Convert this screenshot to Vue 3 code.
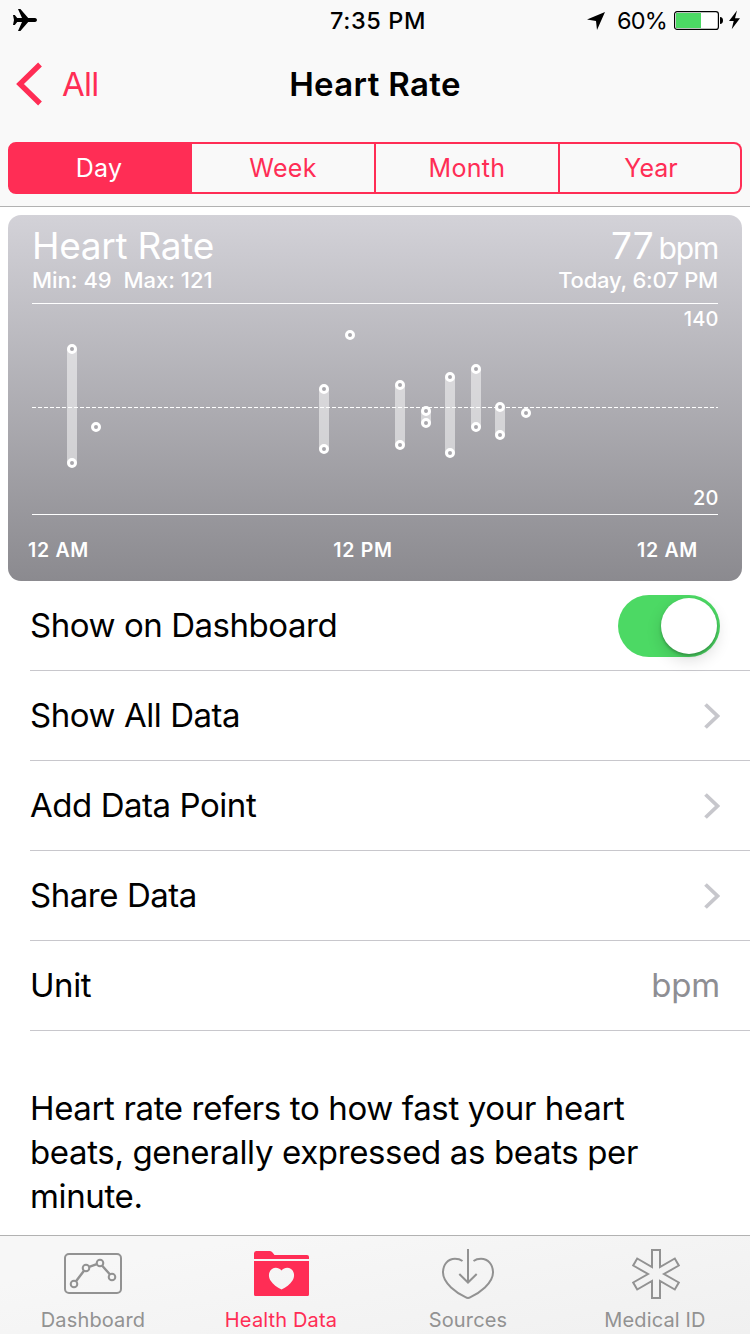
<template>
  <div class="screen">
    <header class="top">
      <!-- Status bar -->
      <div class="status">
        <div class="status-left">
          <svg width="26" height="24" viewBox="0 0 26 24">
            <path d="M1 7H2.8L5.2 10H10L6 1H8.4L16.2 10H23.2Q25 10.6 25 12T23.2 14H16.2L8.4 23H6L10 14H5.2L2.8 17H1L2 12Z" />
          </svg>
        </div>
        <span class="status-time">7:35 PM</span>
        <div class="status-right">
          <svg class="location" width="18" height="18" viewBox="0 0 18 18">
            <path d="M18 0L10 18L9 9L0 7.6Z" />
          </svg>
          <span class="percent">60%</span>
          <svg class="battery" width="50" height="20" viewBox="0 0 50 20">
            <rect x="0.6" y="1.6" width="43.8" height="17.8" rx="2.5" fill="#fff" stroke="#000" stroke-width="1.2" />
            <rect x="2" y="3" width="25" height="15" fill="#4cd964" />
            <path d="M46 7Q49 7.4 49 10.5T46 14Z" />
          </svg>
          <svg width="11" height="20" viewBox="0 0 11 20">
            <path d="M8 0.5L0 11H4.7L2.7 19.3L11 8.3H6Z" />
          </svg>
        </div>
      </div>

      <!-- Navigation bar -->
      <nav class="nav">
        <button class="back">
          <svg width="28" height="44" viewBox="0 0 28 44">
            <path d="M25 2.5L5 22L25 41.5" fill="none" stroke="#ff2d55" stroke-width="5.4" />
          </svg>
          <span>All</span>
        </button>
        <h1 class="title">Heart Rate</h1>
      </nav>

      <div class="segments">
        <button
          v-for="range in ranges"
          :key="range"
          class="segment"
          :class="{ active: selectedRange === range }"
          @click="selectedRange = range"
        >
          {{ range }}
        </button>
      </div>
    </header>

    <!-- Chart card -->
    <section class="card">
      <div class="card-row">
        <span class="card-title">Heart Rate</span>
        <span class="card-value">77<span class="card-unit">bpm</span></span>
      </div>
      <div class="card-row card-sub">
        <span class="card-range">Min: 49&nbsp; Max: 121</span>
        <span class="card-date">Today, 6:07 PM</span>
      </div>
      <svg class="chart" width="686" height="212" viewBox="0 0 686 212">
        <path d="M0 0.5H686M0 211.5H686" stroke="#fff" />
        <path d="M0 104.5H686" stroke="#fff" stroke-dasharray="4 2" />
        <g v-for="point in points" :key="point.x">
          <rect
            v-if="point.low"
            :x="point.x - 5"
            :y="point.high"
            width="10"
            :height="point.low - point.high"
            fill="#fff"
            fill-opacity="0.5"
          />
          <circle class="dot" :cx="point.x" :cy="point.high" r="3.5" />
          <circle v-if="point.low" class="dot" :cx="point.x" :cy="point.low" r="3.5" />
        </g>
        <text class="scale" x="686.5" y="23" text-anchor="end">140</text>
        <text class="scale" x="686.5" y="202" text-anchor="end">20</text>
      </svg>
      <div class="hours">
        <span>12 AM</span>
        <span>12 PM</span>
        <span>12 AM</span>
      </div>
    </section>

    <!-- Options -->
    <ul class="options">
      <li class="option">
        <span class="option-label">Show on Dashboard</span>
        <button class="toggle" :class="{ on: showOnDashboard }" @click="showOnDashboard = !showOnDashboard">
          <span class="knob"></span>
        </button>
      </li>
      <li v-for="link in links" :key="link" class="option">
        <span class="option-label">{{ link }}</span>
        <svg width="18" height="28" viewBox="0 0 18 28">
          <path d="M3.5 2.5L15.5 14L3.5 25.5" fill="none" stroke="#c7c7cc" stroke-width="3.8" />
        </svg>
      </li>
      <li class="option">
        <span class="option-label">Unit</span>
        <span class="option-label unit">bpm</span>
      </li>
    </ul>

    <p class="description">
      Heart rate refers to how fast your heart<br />
      beats, generally expressed as beats per<br />
      minute.
    </p>

    <!-- Tab bar -->
    <footer class="tabs">
      <button
        v-for="tab in tabs"
        :key="tab.id"
        class="tab"
        :class="{ active: selectedTab === tab.id }"
        @click="selectedTab = tab.id"
      >
        <svg width="60" height="56" viewBox="0 0 60 56" fill="none" stroke="currentColor" stroke-width="2">
          <template v-if="tab.id === 'dashboard'">
            <rect x="2" y="8" width="56" height="39" rx="4" />
            <path d="M13 35.3L21 24.7M26.2 20.9L33.8 18.1M39.2 19.7L46.8 28.3" stroke-width="2.4" />
            <circle cx="11" cy="38" r="3.3" />
            <circle cx="23" cy="22" r="3.3" />
            <circle cx="37" cy="17" r="3.3" />
            <circle cx="49" cy="31" r="3.3" />
          </template>
          <g v-else-if="tab.id === 'health'" fill="currentColor" stroke="none">
            <path d="M3 13V7.5Q3 5 5.5 5H19Q20.5 5 21.5 6.5L23.5 9H56Q58 9 58 11V13Z" />
            <path
              fill-rule="evenodd"
              d="M3 15H58V48.5Q58 50 56.5 50H4.5Q3 50 3 48.5ZM30.5 24.6C28 21.5 24 21 21 23C17.5 25.5 17 30.5 19.5 34.5C22 38.5 26 41.5 30.5 43.5C35 41.5 39 38.5 41.5 34.5C44 30.5 43.5 25.5 40 23C37 21 33 21.5 30.5 24.6Z"
            />
          </g>
          <template v-else-if="tab.id === 'sources'">
            <path d="M24.5 15C22 13.2 19.5 12.8 17 12.8C10 12.8 5 18.5 5 26.5C5 37.5 19 47 27.5 51.2Q30 52.6 32.5 51.2C41 47 55 37.5 55 26.5C55 18.5 50 12.8 43 12.8C40.5 12.8 38 13.2 35.5 15" />
            <path d="M30 3V36M21.3 28L30 36.5L38.7 28" />
          </template>
          <path
            v-else
            d="M27 4H35V21.07L49.8 12.5L53.8 19.5L39 28L53.8 36.5L49.8 43.5L35 34.93V52H27V34.93L12.2 43.5L8.2 36.5L23 28L8.2 19.5L12.2 12.5L27 21.07Z"
          />
        </svg>
        <span class="tab-label">{{ tab.label }}</span>
      </button>
    </footer>
  </div>
</template>

<script setup>
import { ref } from 'vue'

const ranges = ['Day', 'Week', 'Month', 'Year']
const selectedRange = ref('Day')

// chart coordinates, low is missing for single readings
const points = [
  { x: 40, high: 46, low: 160 },
  { x: 64, high: 124 },
  { x: 292, high: 86, low: 146 },
  { x: 318, high: 32 },
  { x: 368, high: 82, low: 142 },
  { x: 394, high: 108, low: 120 },
  { x: 418, high: 74, low: 150 },
  { x: 444, high: 66, low: 124 },
  { x: 468, high: 104, low: 132 },
  { x: 494, high: 110 }
]

const showOnDashboard = ref(true)
const links = ['Show All Data', 'Add Data Point', 'Share Data']

const tabs = [
  { id: 'dashboard', label: 'Dashboard' },
  { id: 'health', label: 'Health Data' },
  { id: 'sources', label: 'Sources' },
  { id: 'medical', label: 'Medical ID' }
]
const selectedTab = ref('health')
</script>

<style>
body {
  margin: 0;
  background: #fff;
}
</style>

<style scoped>
.screen {
  display: flex;
  flex-direction: column;
  width: 750px;
  height: 1334px;
  overflow: hidden;
  background: #fff;
  color: #000;
  font-family: Inter, 'Liberation Sans', sans-serif;
}

button {
  margin: 0;
  padding: 0;
  border: none;
  background: none;
  font-family: inherit;
  cursor: pointer;
}

svg {
  display: block;
  flex: none;
}

.top {
  box-sizing: border-box;
  height: 207px;
  background: #f9f9f9;
  border-bottom: 1px solid #b2b2b2;
}

.status {
  display: grid;
  grid-template-columns: 1fr auto 1fr;
  align-items: center;
  height: 40px;
  padding: 0 10px 0 12px;
}

.status-time {
  padding-top: 2px;
  margin-left: 4px;
  font-size: 23.5px;
  font-weight: 500;
  line-height: 38px;
  letter-spacing: 0.6px;
}

.status-right {
  display: flex;
  justify-content: flex-end;
  align-items: center;
}

.location {
  margin: 2px 12px 0 0;
}

.percent {
  padding-top: 2px;
  font-size: 23.5px;
  line-height: 38px;
  letter-spacing: -0.8px;
}

.battery {
  margin: 0 5px 0 7px;
}

.nav {
  display: grid;
  grid-template-columns: 1fr auto 1fr;
  align-items: center;
  height: 88px;
}

.back {
  display: flex;
  align-items: center;
  gap: 19px;
  padding-left: 15px;
  color: #ff2d55;
  font-size: 33px;
  line-height: 44px;
  letter-spacing: -0.8px;
}

.title {
  margin: 0;
  font-size: 33px;
  font-weight: 600;
  line-height: 44px;
  letter-spacing: 0.35px;
}

.segments {
  display: grid;
  grid-template-columns: 184px 184px 184px 182px;
  height: 52px;
  margin: 14px 8px 0;
}

.segment {
  border: 2px solid #ff2d55;
  border-left: none;
  color: #ff2d55;
  font-size: 25px;
  letter-spacing: 0.3px;
}

.segment:first-child {
  padding-right: 2px;
  border-left: 2px solid #ff2d55;
  border-radius: 8px 0 0 8px;
}

.segment:last-child {
  padding-left: 2px;
  border-radius: 0 8px 8px 0;
  letter-spacing: 0;
}

.segment.active {
  background: #ff2d55;
  color: #fff;
}

.card {
  box-sizing: border-box;
  height: 366px;
  margin: 8px 8px 0;
  padding: 11px 24px 0;
  border-radius: 13px;
  background: linear-gradient(#d3d2d8, #8b8a8f);
  color: #fff;
}

.card-row {
  display: flex;
  justify-content: space-between;
  align-items: baseline;
  height: 42px;
  line-height: 40px;
}

.card-title,
.card-value {
  font-size: 37px;
  font-weight: 400;
}

.card-title {
  letter-spacing: -0.3px;
}

.card-unit {
  margin-left: 5px;
  font-size: 30px;
  letter-spacing: -1.2px;
}

.card-sub {
  height: 35px;
  font-size: 22px;
  font-weight: 500;
  line-height: 24px;
}

.card-date {
  letter-spacing: -0.2px;
}

.dot {
  fill: #a9a8ad;
  stroke: #fff;
  stroke-width: 3;
}

.scale {
  fill: #fff;
  font-size: 20px;
  font-weight: 500;
  letter-spacing: 0.1px;
}

.hours {
  display: flex;
  justify-content: space-between;
  padding: 23px 20px 0 0;
  margin-left: -4px;
  font-size: 19.5px;
  font-weight: 600;
  line-height: 24px;
  letter-spacing: 0.7px;
}

.options {
  margin: 0;
  padding: 0 0 0 30px;
  list-style: none;
}

.option {
  box-sizing: border-box;
  display: flex;
  justify-content: space-between;
  align-items: center;
  height: 90px;
  padding-right: 30px;
  border-bottom: 1px solid #c8c7cc;
  font-size: 33px;
}

.option-label {
  padding-bottom: 2px;
  letter-spacing: -0.45px;
}

.unit {
  color: #8e8e93;
  letter-spacing: -0.2px;
}

.toggle {
  box-sizing: border-box;
  display: flex;
  width: 102px;
  height: 62px;
  padding: 3px;
  border-radius: 31px;
  background: #e5e5ea;
}

.toggle.on {
  justify-content: flex-end;
  background: #4cd964;
}

.knob {
  width: 56px;
  height: 56px;
  border-radius: 50%;
  background: #fff;
  box-shadow: 0 2px 3px rgba(0, 0, 0, 0.25), 0 6px 16px rgba(0, 0, 0, 0.14);
}

.description {
  margin: 55px 0 0 30px;
  font-size: 33px;
  line-height: 44px;
  letter-spacing: -0.36px;
  white-space: nowrap;
}

.tabs {
  box-sizing: border-box;
  display: grid;
  grid-template-columns: 186px 190px 184px 190px;
  height: 99px;
  margin-top: auto;
  padding-top: 10px;
  border-top: 1px solid #b2b2b2;
  background: linear-gradient(170deg, #f7f7f7 20%, #f0f0f0);
}

.tab {
  display: flex;
  flex-direction: column;
  align-items: center;
  gap: 6px;
  color: #929292;
}

.tab.active {
  color: #ff2d55;
}

.tab-label {
  font-size: 20px;
  line-height: 24px;
  letter-spacing: 0.15px;
}
</style>
